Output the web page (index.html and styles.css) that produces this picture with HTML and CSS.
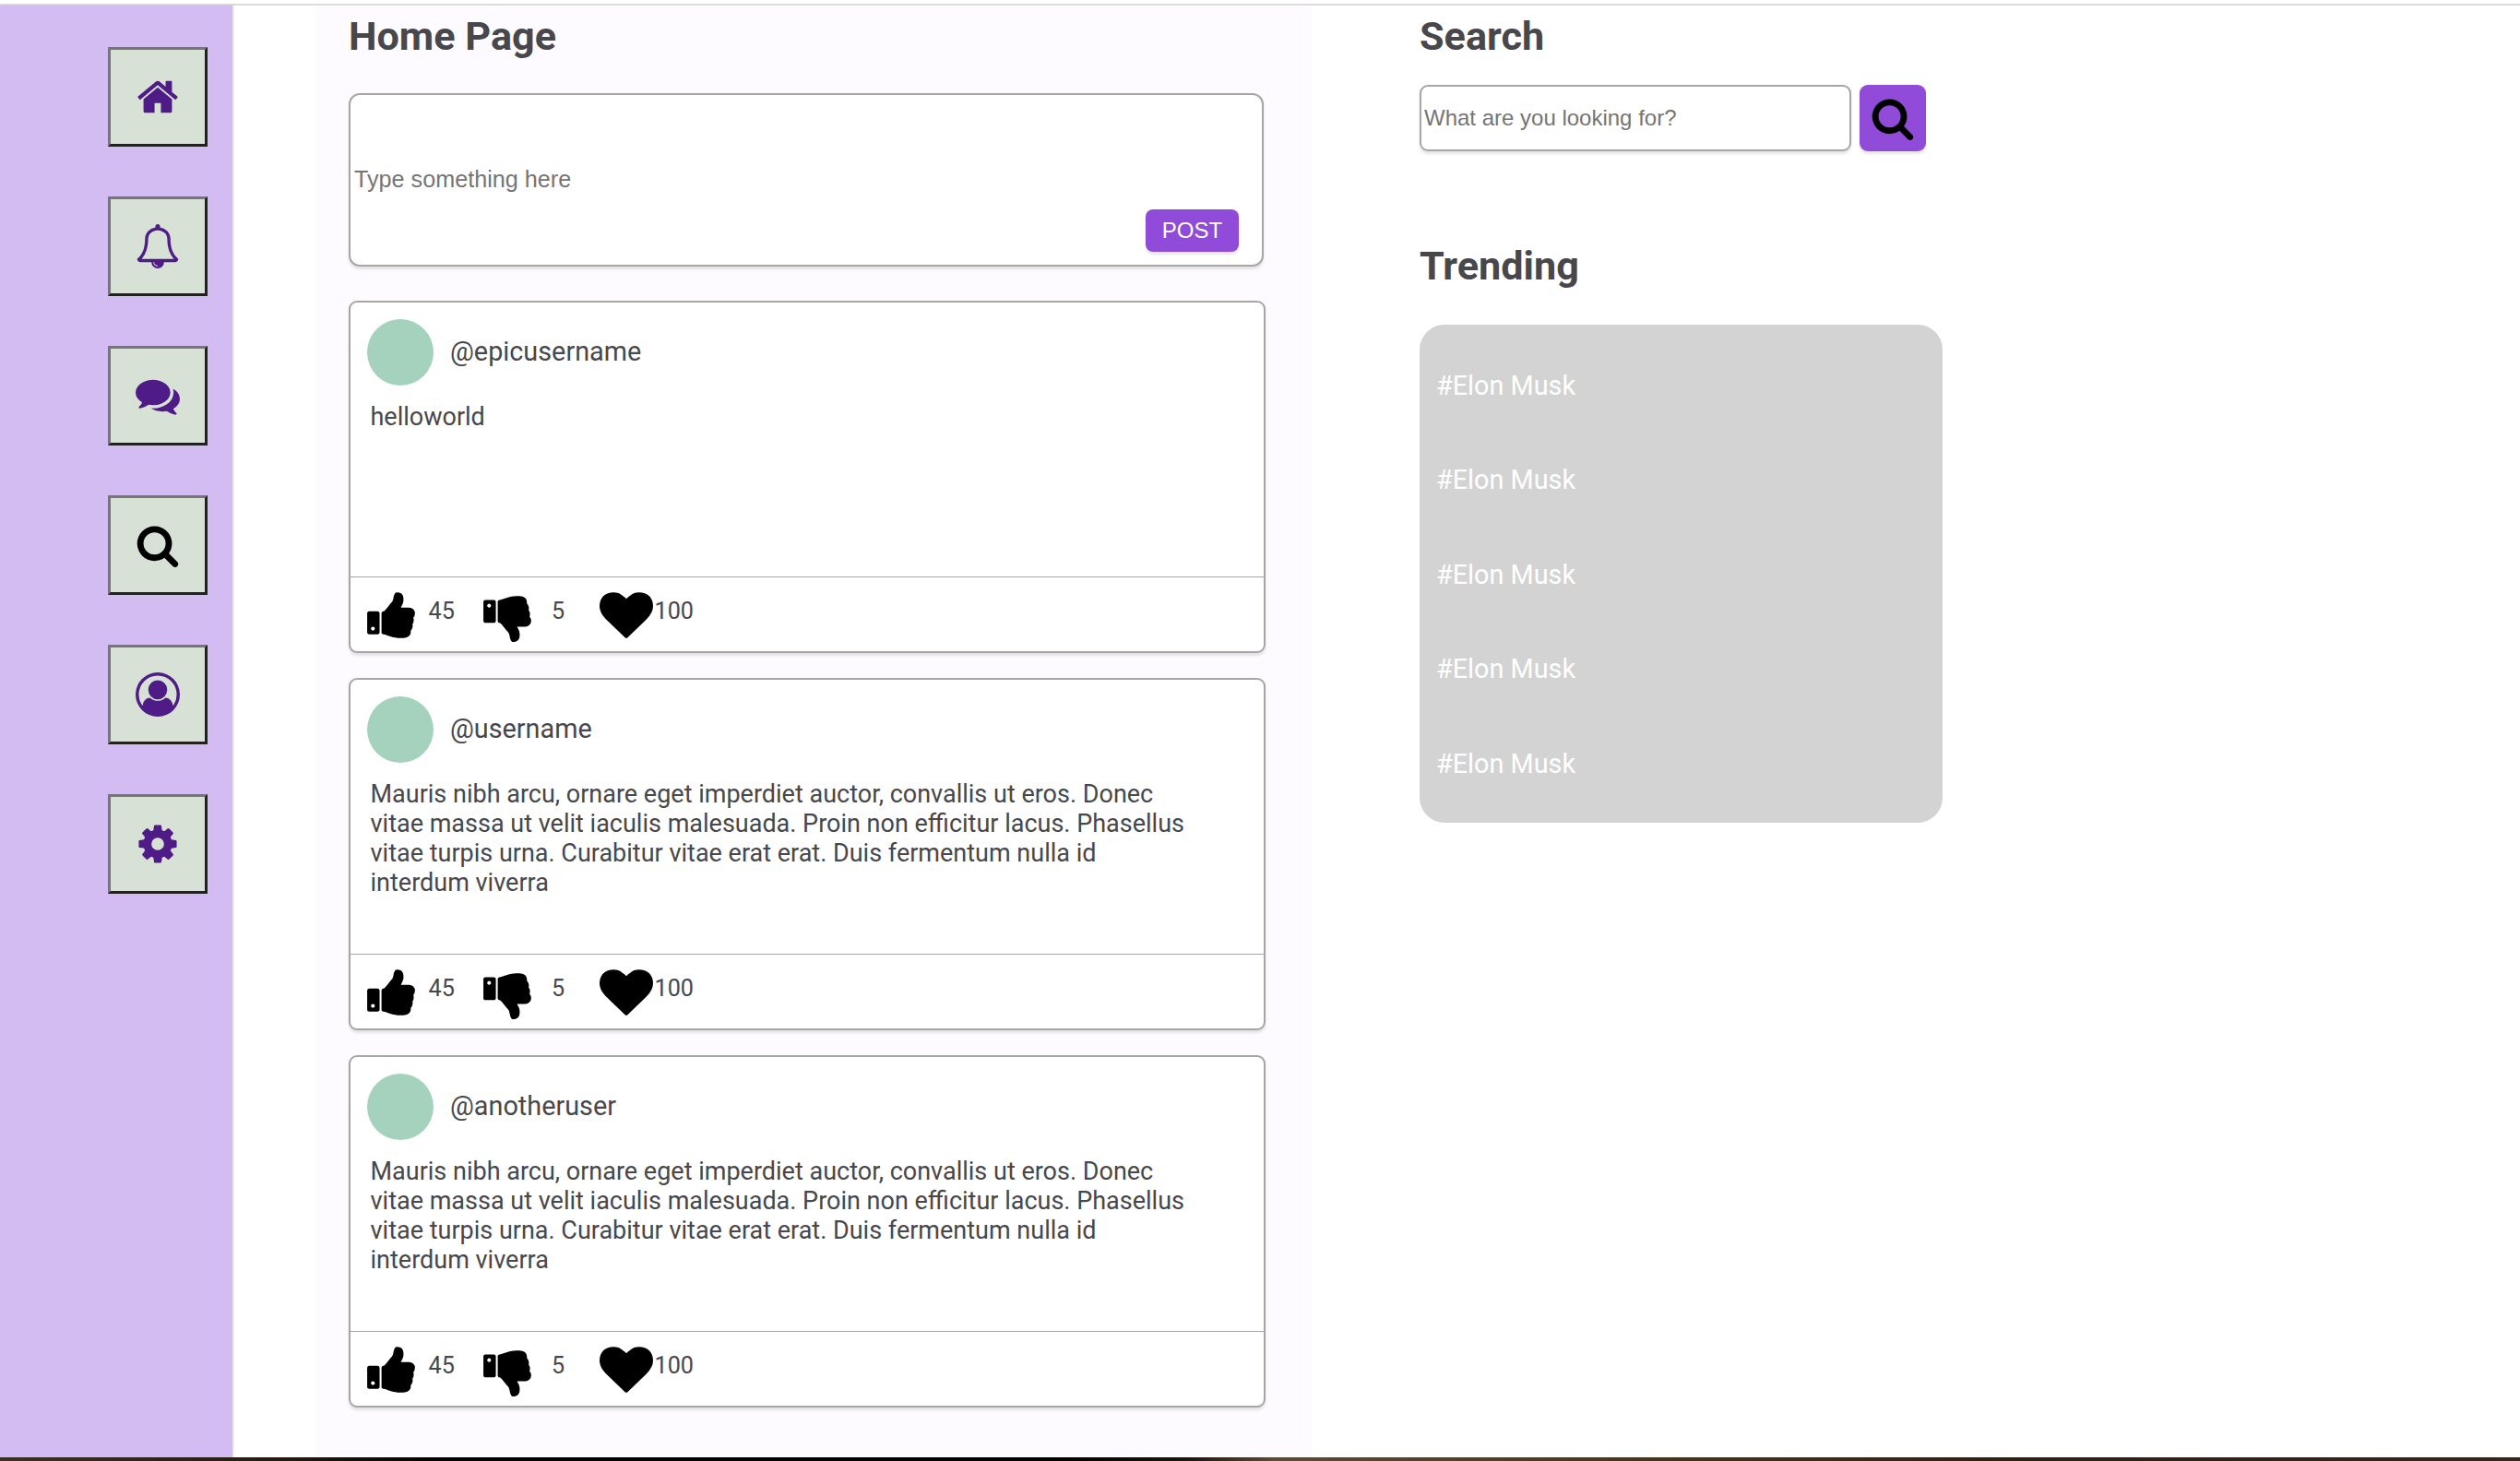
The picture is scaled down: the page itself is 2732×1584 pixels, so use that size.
FILE: index.html
```html
<!DOCTYPE html>
<html lang="en">

<head>
    <meta charset="UTF-8">
    <meta name="viewport" content="width=device-width, initial-scale=1.0">
    <title>Home Page</title>
    <link rel="stylesheet" href="styles.css">
</head>

<body>
    <!-- icons used more than once -->
    <svg class="sprite">
        <symbol id="search" viewBox="0 0 1792 1792"><path d="M1216 832q0-185-131.5-316.5t-316.5-131.5-316.5 131.5-131.5 316.5 131.5 316.5 316.5 131.5 316.5-131.5 131.5-316.5zm512 832q0 52-38 90t-90 38q-54 0-90-38l-343-342q-179 124-399 124-143 0-273.5-55.5t-225-150-150-225-55.5-273.5 55.5-273.5 150-225 225-150 273.5-55.5 273.5 55.5 225 150 150 225 55.5 273.5q0 220-124 399l343 343q37 37 37 90z"/></symbol>
        <symbol id="like" viewBox="0 0 1792 1792"><path d="M320 1344q0-26-19-45t-45-19q-27 0-45.5 19t-18.5 45q0 27 18.5 45.5t45.5 18.5q26 0 45-18.5t19-45.5zm160-512v640q0 26-19 45t-45 19h-288q-26 0-45-19t-19-45v-640q0-26 19-45t45-19h288q26 0 45 19t19 45zm1184 0q0 86-55 149 15 44 15 76 3 76-43 137 17 56 0 117-15 57-54 94 9 112-49 181-64 76-197 78h-129q-66 0-144-15.5t-121.5-29-120.5-39.5q-123-43-158-44-26-1-45-19.5t-19-44.5v-641q0-25 18-43.5t43-20.5q24-2 76-59t101-121q68-87 101-120 18-18 31-48t17.5-48.5 13.5-60.5q7-39 12.5-61t19.5-52 34-50q19-19 45-19 46 0 82.5 10.5t60 26 40 40.5 24 45 12 50 5 45 .5 39q0 38-9.5 76t-19 60-27.5 56q-3 6-10 18t-11 22-8 24h277q78 0 135 57t57 135z"/></symbol>
        <symbol id="dislike" viewBox="0 0 1792 1792"><path d="M320 576q0 26-19 45t-45 19q-27 0-45.5-19t-18.5-45q0-27 18.5-45.5t45.5-18.5q26 0 45 18.5t19 45.5zm160 512v-640q0-26-19-45t-45-19h-288q-26 0-45 19t-19 45v640q0 26 19 45t45 19h288q26 0 45-19t19-45zm1129-149q55 61 55 149-1 78-57.5 135t-134.5 57h-277q4 14 8 24t11 22 10 18q18 37 27 57t19 58.5 10 76.5q0 24-.5 39t-5 45-12 50-24 45-40 40.5-60 26-82.5 10.5q-26 0-45-19-20-20-34-50t-19.5-52-12.5-61q-9-42-13.5-60.5t-17.5-48.5-31-48q-33-33-101-120-49-64-101-121t-76-59q-25-2-43-20.5t-18-43.5v-641q0-26 19-44.5t45-19.5q35-1 158-44 77-26 120.5-39.5t121.5-29 144-15.5h129q133 2 197 78 58 69 49 181 39 37 54 94 17 61 0 117 46 61 43 137 0 32-15 76z"/></symbol>
        <symbol id="heart" viewBox="0 0 1792 1792"><path d="M896 1664q-26 0-44-18l-624-602q-10-8-27.5-26t-55.5-65.5-68-97.5-53.5-121-23.5-138q0-220 127-344t351-124q62 0 126.5 21.5t120 58 95.5 68.5 76 68q36-36 76-68t95.5-68.5 120-58 126.5-21.5q224 0 351 124t127 344q0 221-229 450l-623 600q-18 18-44 18z"/></symbol>
    </svg>

    <div class="container">
        <div class="sidebar">
            <button class="sidebar__btn">
                <svg class="icon" viewBox="0 0 1792 1792"><path d="M1472 992v480q0 26-19 45t-45 19h-384v-384h-256v384h-384q-26 0-45-19t-19-45v-480q0-1 .5-3t.5-3l575-474 575 474q1 2 1 6zm223-69l-62 74q-8 9-21 11h-3q-13 0-21-7l-692-577-692 577q-12 8-24 7-13-2-21-11l-62-74q-8-10-7-23.5t11-21.5l719-599q32-26 76-26t76 26l244 204v-195q0-14 9-23t23-9h192q14 0 23 9t9 23v408l219 182q10 8 11 21.5t-7 23.5z"/></svg>
            </button>
            <button class="sidebar__btn">
                <svg class="icon" viewBox="0 0 1792 1792"><path d="M912 1696q0-16-16-16-59 0-101.5-42.5t-42.5-101.5q0-16-16-16t-16 16q0 73 51.5 124.5t124.5 51.5q16 0 16-16zm-666-288h1300q-266-300-266-832 0-51-24-105t-69-103-121.5-80.5-169.5-31.5-169.5 31.5-121.5 80.5-69 103-24 105q0 532-266 832zm1482 0q0 52-38 90t-90 38h-448q0 106-75 181t-181 75-181-75-75-181h-448q-52 0-90-38t-38-90q50-42 91-88t85-119.5 74.5-158.5 50-206 19.5-260q0-152 117-282.5t307-158.5q-8-19-8-39 0-40 28-68t68-28 68 28 28 68q0 20-8 39 190 28 307 158.5t117 282.5q0 139 19.5 260t50 206 74.5 158.5 85 119.5 91 88z"/></svg>
            </button>
            <button class="sidebar__btn">
                <svg class="icon" viewBox="0 0 1792 1792"><path d="M1408 768q0 139-94 257t-256.5 186.5-353.5 68.5q-86 0-176-16-124 88-278 128-36 9-86 16h-3q-11 0-20.5-8t-11.5-21q-1-3-1-6.5t.5-6.5 2-6l2.5-5 3.5-5.5 4-5 4.5-5 4-4.5q5-6 23-25t26-29.5 22.5-29 25-38.5 20.5-44q-124-72-195-177t-71-224q0-139 94-257t256.5-186.5 353.5-68.5 353.5 68.5 256.5 186.5 94 257zm384 256q0 120-71 224.5t-195 176.5q10 24 20.5 44t25 38.5 22.5 29 26 29.5 23 25q1 1 4 4.5t4.5 5 4 5 3.5 5.5l2.5 5 2 6 .5 6.5-1 6.5q-3 14-13 22t-22 7q-50-7-86-16-154-40-278-128-90 16-176 16-271 0-472-132 58 4 88 4 161 0 309-45t264-129q125-92 192-212t67-254q0-77-23-152 129 71 204 178t75 230z"/></svg>
            </button>
            <button class="sidebar__btn">
                <svg class="icon icon--black"><use href="#search"/></svg>
            </button>
            <button class="sidebar__btn">
                <svg class="icon" viewBox="0 0 1792 1792"><path d="M896 0q182 0 348 71t286 191 191 286 71 348q0 181-70.5 347t-190.5 286-286 191.5-349 71.5-349-71-285.5-191.5-190.5-286-71-347.5 71-348 191-286 286-191 348-71zm619 1351q149-205 149-455 0-156-61-298t-164-245-245-164-298-61-298 61-245 164-164 245-61 298q0 250 149 455 66-327 306-327 131 128 313 128t313-128q240 0 306 327zm-235-647q0-159-112.5-271.5t-271.5-112.5-271.5 112.5-112.5 271.5 112.5 271.5 271.5 112.5 271.5-112.5 112.5-271.5z"/></svg>
            </button>
            <button class="sidebar__btn">
                <svg class="icon" viewBox="0 0 1792 1792"><path d="M1152 896q0-106-75-181t-181-75-181 75-75 181 75 181 181 75 181-75 75-181zm512-109v222q0 12-8 23t-20 13l-185 28q-19 54-39 91 35 50 107 138 10 12 10 25t-9 23q-27 37-99 108t-94 71q-12 0-26-9l-138-108q-44 23-91 38-16 136-29 186-7 28-36 28h-222q-14 0-24.5-8.5t-11.5-21.5l-28-184q-49-16-90-37l-141 107q-10 9-25 9-14 0-25-11-126-114-165-168-7-10-7-23 0-12 8-23 15-21 51-66.5t54-70.5q-27-50-41-99l-183-27q-13-2-21-12.5t-8-23.5v-222q0-12 8-23t19-13l186-28q14-46 39-92-40-57-107-138-10-12-10-24 0-10 9-23 26-36 98.5-107.5t94.5-71.5q13 0 26 10l138 107q44-23 91-38 16-136 29-186 7-28 36-28h222q14 0 24.5 8.5t11.5 21.5l28 184q49 16 90 37l142-107q9-9 24-9 13 0 25 10 129 119 165 170 7 8 7 22 0 12-8 23-15 21-51 66.5t-54 70.5q26 50 41 98l183 28q13 2 21 12.5t8 23.5z"/></svg>
            </button>
        </div>

        <div class="feed">
            <h1>Home Page</h1>
            <div class="newPost">
                <input class="newPost__input" type="text" placeholder="Type something here">
                <button class="newPost__btn">POST</button>
            </div>

            <div class="post">
                <div class="post__head">
                    <div class="avatar"></div>
                    <p class="username">@epicusername</p>
                </div>
                <p class="post__text">helloworld</p>
                <div class="post__foot">
                    <svg class="react"><use href="#like"/></svg>
                    <span class="count">45</span>
                    <svg class="react"><use href="#dislike"/></svg>
                    <span class="count count--dislike">5</span>
                    <svg class="react"><use href="#heart"/></svg>
                    <span class="count count--heart">100</span>
                </div>
            </div>

            <div class="post">
                <div class="post__head">
                    <div class="avatar"></div>
                    <p class="username">@username</p>
                </div>
                <p class="post__text">Mauris nibh arcu, ornare eget imperdiet auctor, convallis ut eros. Donec vitae massa ut velit iaculis malesuada. Proin non efficitur lacus. Phasellus vitae turpis urna. Curabitur vitae erat erat. Duis fermentum nulla id interdum viverra</p>
                <div class="post__foot">
                    <svg class="react"><use href="#like"/></svg>
                    <span class="count">45</span>
                    <svg class="react"><use href="#dislike"/></svg>
                    <span class="count count--dislike">5</span>
                    <svg class="react"><use href="#heart"/></svg>
                    <span class="count count--heart">100</span>
                </div>
            </div>

            <div class="post">
                <div class="post__head">
                    <div class="avatar"></div>
                    <p class="username">@anotheruser</p>
                </div>
                <p class="post__text">Mauris nibh arcu, ornare eget imperdiet auctor, convallis ut eros. Donec vitae massa ut velit iaculis malesuada. Proin non efficitur lacus. Phasellus vitae turpis urna. Curabitur vitae erat erat. Duis fermentum nulla id interdum viverra</p>
                <div class="post__foot">
                    <svg class="react"><use href="#like"/></svg>
                    <span class="count">45</span>
                    <svg class="react"><use href="#dislike"/></svg>
                    <span class="count count--dislike">5</span>
                    <svg class="react"><use href="#heart"/></svg>
                    <span class="count count--heart">100</span>
                </div>
            </div>
        </div>

        <div class="aside">
            <h1>Search</h1>
            <div class="search">
                <input class="search__input" type="text" placeholder="What are you looking for?">
                <button class="search__btn">
                    <svg class="icon icon--black"><use href="#search"/></svg>
                </button>
            </div>
            <h1>Trending</h1>
            <div class="trending">
                <p>#Elon Musk</p>
                <p>#Elon Musk</p>
                <p>#Elon Musk</p>
                <p>#Elon Musk</p>
                <p>#Elon Musk</p>
            </div>
        </div>
    </div>
    <div class="strip"></div>
</body>

</html>
```
FILE: styles.css
```css
* {
    margin: 0;
    padding: 0;
    box-sizing: border-box;
}

body {
    height: 1584px;
    overflow: hidden;
    padding-top: 4px;
    display: flex;
    flex-direction: column;
    font-family: Roboto, sans-serif;
    color: #48474b;
    background-color: white;
}

h1 {
    font-size: 43.2px;
    line-height: 50px;
    font-weight: 700;
}

.sprite {
    display: none;
}

.container {
    flex: 1;
    display: flex;
    align-items: stretch;
    border-top: 2px solid #dcdcdc;
}

.strip {
    height: 4px;
    background: linear-gradient(to right, #3d3026 0, #241b15 300px, #000 480px, #000 1150px, #1c1611 1290px, #5a4a38 1380px, #43361f 1800px, #2b2114 2200px, #33281b 2732px);
}

.sidebar {
    width: 252px;
    padding: 45px 27px 0 0;
    display: flex;
    flex-direction: column;
    align-items: flex-end;
    gap: 54px;
    background-color: #d3bcf2;
    box-shadow: 1px 0 2px rgba(0, 0, 0, 0.15);
}

.sidebar__btn {
    width: 108px;
    height: 108px;
    display: flex;
    align-items: center;
    justify-content: center;
    background-color: #d7e1d5;
    border: 3px solid;
    border-color: #767676 #212121 #212121 #767676;
}

.icon {
    width: 48px;
    height: 48px;
    fill: #4f1c87;
}

.icon--black {
    fill: black;
}

.feed {
    width: 1080px;
    margin-left: 90px;
    padding: 9px 36px 0;
    background-color: #fdfbff;
}

.newPost {
    width: 992px;
    height: 188px;
    margin: 36px 0 37px;
    display: flex;
    align-items: flex-end;
    background-color: white;
    border: 2px solid #a6a6a3;
    border-radius: 12px;
    box-shadow: 0 3px 3px rgba(0, 0, 0, 0.1);
}

input {
    font-family: "Liberation Sans", Arial, sans-serif;
    border: none;
    outline: none;
    background-color: white;
}

input::placeholder {
    color: #757575;
}

.newPost__input {
    flex: 1;
    height: 184px;
    padding: 0 0 2px 4px;
    font-size: 25.2px;
    border-radius: 12px;
}

.newPost__btn {
    width: 101px;
    height: 46px;
    margin: 0 25px 14px 0;
    font-family: "Liberation Sans", Arial, sans-serif;
    font-size: 24px;
    color: white;
    background-color: #904bd8;
    border: none;
    border-radius: 8px;
    box-shadow: 0 3px 3px rgba(0, 0, 0, 0.1);
}

.post {
    width: 994px;
    height: 382px;
    margin-bottom: 27px;
    display: flex;
    flex-direction: column;
    background-color: white;
    border: 2px solid #a6a6a3;
    border-radius: 9px;
    box-shadow: 0 3px 3px rgba(0, 0, 0, 0.1);
}

.post__head {
    display: flex;
    align-items: center;
    padding: 18px 18px 0;
}

.avatar {
    width: 72px;
    height: 72px;
    border-radius: 50%;
    background-color: #a5d2bc;
}

.username {
    margin-left: 18px;
    padding-bottom: 2px;
    font-size: 28.8px;
}

.post__text {
    flex: 1;
    width: 920px;
    padding: 18px 0 0 21.5px;
    font-size: 27px;
    line-height: 32px;
}

.post__foot {
    height: 81px;
    display: flex;
    align-items: flex-start;
    padding: 12px 16px 0;
    border-top: 1px solid #a6a6a3;
}

.react {
    width: 58px;
    height: 58px;
}

.count {
    width: 68px;
    padding: 9px 0 0 10.5px;
    font-size: 25.2px;
    line-height: 32px;
}

.count--dislike {
    width: 70px;
    padding-left: 18px;
}

.count--heart {
    padding-left: 1.5px;
}

.aside {
    width: 567px;
    margin-left: 117px;
    padding-top: 9px;
}

.search {
    display: flex;
    gap: 9px;
    margin: 27px 0 100px;
}

.search__input {
    width: 468px;
    height: 72px;
    padding-left: 3px;
    font-size: 24px;
    border: 2px solid #a6a6a3;
    border-radius: 9px;
    box-shadow: 0 3px 3px rgba(0, 0, 0, 0.1);
}

.search__btn {
    width: 72px;
    height: 72px;
    display: flex;
    align-items: center;
    justify-content: center;
    background-color: #904bd8;
    border: none;
    border-radius: 9px;
    box-shadow: 0 3px 3px rgba(0, 0, 0, 0.1);
}

.trending {
    height: 540px;
    margin-top: 38px;
    padding: 49px 18px 0;
    background-color: #d3d3d3;
    border-radius: 27px;
    color: white;
}

.trending p {
    font-size: 28.8px;
    line-height: 34px;
    margin-bottom: 68.4px;
}
```
